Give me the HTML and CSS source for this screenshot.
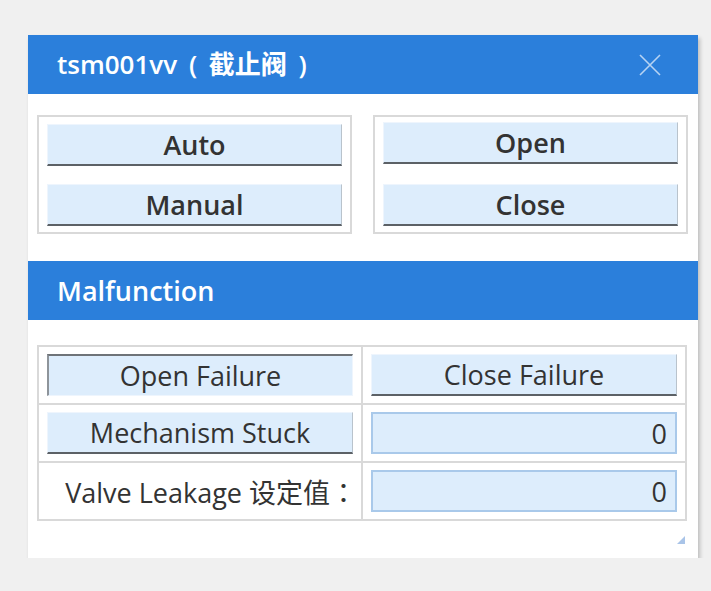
FILE: index.html
```html
<!DOCTYPE html>
<html lang="zh-CN">
<head>
<meta charset="utf-8">
<title>tsm001vv ( 截止阀 )</title>
<link rel="stylesheet" href="styles.css">
</head>
<body>
<div class="dialog">
  <div class="titlebar">
    <span class="title">tsm001vv ( 截止阀 )</span>
    <button class="close" aria-label="关闭">
      <svg width="24" height="24" viewBox="0 0 24 24"><path d="M2 2 L22 22 M22 2 L2 22" stroke="#b7d3f3" stroke-width="1.6" fill="none"/></svg>
    </button>
  </div>

  <div class="controls">
    <div class="group">
      <button class="btn">Auto</button>
      <button class="btn">Manual</button>
    </div>
    <div class="group">
      <button class="btn btn-up">Open</button>
      <button class="btn">Close</button>
    </div>
  </div>

  <div class="section-head">Malfunction</div>

  <table class="faults">
    <tr>
      <td><button class="cell-btn pressed">Open Failure</button></td>
      <td><button class="cell-btn">Close Failure</button></td>
    </tr>
    <tr>
      <td><button class="cell-btn">Mechanism Stuck</button></td>
      <td><input class="value" type="text" value="0"></td>
    </tr>
    <tr>
      <td class="label">Valve Leakage 设定值<span class="colon" lang="zh-Hant">：</span></td>
      <td><input class="value" type="text" value="0"></td>
    </tr>
  </table>

  <div class="grip"></div>
</div>
</body>
</html>
```

FILE: styles.css
```css
* { box-sizing: border-box; }

body {
  margin: 0;
  background: #f0f0f0;
  font-family: "Open Sans", "Noto Sans CJK SC", sans-serif;
  color: #333;
}

.dialog {
  position: relative;
  margin: 35px 0 0 28px;
  width: 670px;
  height: 523px;
  background: #fff;
  box-shadow: 2px 3px 4px rgba(0, 0, 0, 0.22);
}

.titlebar {
  height: 59px;
  background: #2b7fdb;
  display: flex;
  align-items: center;
  justify-content: space-between;
  padding: 0 36px 0 29px;
}

.title {
  color: #fff;
  font-size: 26px;
  font-weight: 600;
  white-space: pre;
  word-spacing: 5px;
  margin-top: -4px;
}

.close {
  background: none;
  border: 0;
  padding: 0;
  display: flex;
}

.controls {
  display: flex;
  gap: 21px;
  padding: 21px 10px 0 9px;
}

.group {
  width: 315px;
  height: 119px;
  border: 2px solid #d9d9d9;
  padding: 7px 8px 0 8px;
  display: flex;
  flex-direction: column;
  gap: 18px;
}

.btn, .cell-btn {
  font-family: inherit;
  color: #333;
  background: #ddedfc;
  border: 0;
  border-top: 1px solid #eef5fd;
  border-left: 1px solid #eef5fd;
  border-right: 1px solid #b9c3cc;
  border-bottom: 2px solid #5c6166;
  height: 42px;
  padding: 0;
  width: 100%;
  line-height: 1;
}

.btn {
  font-size: 27px;
  font-weight: 600;
}

.btn-up { margin-top: -2px; margin-bottom: 2px; }

.section-head {
  margin-top: 27px;
  height: 59px;
  background: #2b7fdb;
  color: #fff;
  font-size: 27px;
  font-weight: 600;
  display: flex;
  align-items: center;
  padding-left: 29px;
}

.faults {
  margin: 25px 0 0 9px;
  width: 650px;
  border-collapse: collapse;
  border: 2px solid #d9d9d9;
}

.faults td {
  border: 2px solid #d9d9d9;
  height: 58px;
  padding: 0 8px;
  width: 50%;
}

.cell-btn {
  font-size: 27px;
  font-weight: 400;
}

.cell-btn.pressed {
  border-top: 2px solid #6e7378;
  border-left: 2px solid #8e949a;
  border-right: 1px solid #eef5fd;
  border-bottom: 1px solid #eef5fd;
}

.value {
  display: block;
  width: 100%;
  height: 42px;
  background: #ddedfc;
  border: 2px solid #a9c9ea;
  font-family: inherit;
  font-size: 27px;
  color: #333;
  text-align: right;
  padding: 0 8px;
}

.faults td.label {
  text-align: right;
  font-size: 27px;
  padding-right: 4px;
  white-space: nowrap;
}

.colon {
  font-family: "Noto Sans CJK TC", sans-serif;
}

.grip {
  position: absolute;
  right: 13px;
  bottom: 14px;
  width: 0;
  height: 0;
  border-left: 8px solid transparent;
  border-bottom: 8px solid #a9c4e8;
}
```
